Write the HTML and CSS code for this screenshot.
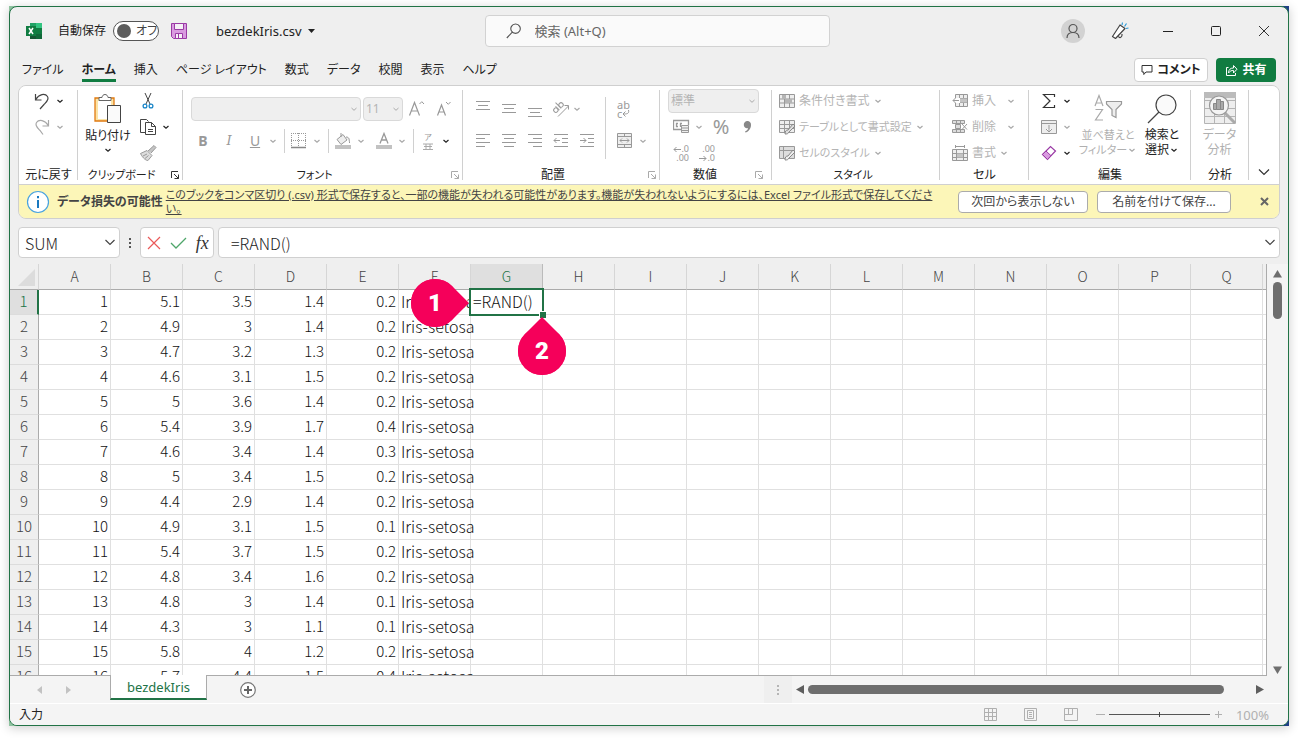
FILE: index.html
```html
<!DOCTYPE html>
<html lang="ja">
<head>
<meta charset="utf-8">
<title>bezdekIris.csv</title>
<link rel="stylesheet" href="styles.css">
</head>
<body>
<svg class="defs" aria-hidden="true">
  <symbol id="chev" viewBox="0 0 8 8"><path d="M1.5 3 4 5.3 6.5 3" fill="none" stroke="currentColor" stroke-width="1.2"/></symbol>
  <symbol id="launch" viewBox="0 0 10 10"><path d="M1.5 8V1.5H8M4 4l4.5 4.5M8.5 4.500V8.500H4.500" fill="none" stroke="currentColor"/></symbol>
</svg>
<div class="frame">
<div class="window">
  <header class="titlebar">
    <div class="title-left">
      <svg class="excel" width="17" height="16" viewBox="0 0 17 16"><path fill="#107c41" d="M4 0h12v16H4z"/><path fill="#21a366" d="M4 0h6v5H4z"/><path fill="#33c481" d="M10 0h6v5h-6z"/><path fill="#185c37" d="M4 10h6v6H4z"/><path fill="#134a2c" d="M4 11h12v5H4z" opacity=".4"/><path fill="#107c41" d="M0 3h10v10H0z"/><path d="m3 5 4 6M7 5l-4 6" stroke="#fff" stroke-width="1.500"/></svg>
      <span>自動保存</span>
      <button class="toggle" type="button" role="switch" aria-checked="false"><i></i>オフ</button>
      <button class="plain" type="button" aria-label="上書き保存"><svg width="16" height="16" viewBox="0 0 16 16"><path fill="#d99be0" stroke="#9a3aa5" d="M.5.5h15v15H2.500l-2-2z"/><path fill="#f5f0f6" stroke="#9a3aa5" d="M3.500.5h9v6h-9zM4.500 10.500h7v5h-7z"/><path stroke="#9a3aa5" d="M7.500 11v4"/></svg></button>
      <button class="plain docname" type="button">bezdekIris.csv <svg width="7" height="4" viewBox="0 0 7 4"><path d="M0 0h7L3.500 4z" fill="#222"/></svg></button>
    </div>
    <label class="search"><svg width="16" height="16" viewBox="0 0 16 16"><path d="M9.500 1a4.700 4.700 0 1 0 .1 0zM6.300 9.200.8 15" fill="none" stroke="#555" stroke-width="1.100"/></svg><input type="text" placeholder="検索 (Alt+Q)" aria-label="検索"></label>
    <div class="title-right">
      <button class="plain avatar" type="button" aria-label="アカウント"><svg width="24" height="24" viewBox="0 0 24 24"><circle cx="12" cy="12" r="12" fill="#d2d2d2"/><g fill="none" stroke="#555" stroke-width="1.200"><circle cx="12" cy="9.500" r="4"/><path d="M6 19c0-3.500 2.500-5.500 6-5.500s6 2 6 5.500"/></g></svg></button>
      <button class="plain" type="button" aria-label="新機能"><svg width="18" height="18" viewBox="0 0 18 18"><path d="M9 3 14 6.500 4.500 16.500 1.500 14.500zM7.500 14.500c1 2 4 1 3.500-2.500" fill="#fff" stroke="#444" stroke-width="1.200" stroke-linejoin="round"/><path d="m11 3 .5-2.500M13.500 4.500l2-3M15 6.500l2.500-.5" stroke="#2b9bd8" stroke-width="1.200"/></svg></button>
      <button class="plain" type="button" aria-label="最小化"><svg width="12" height="12"><path d="M1 6.500h10" stroke="#222"/></svg></button>
      <button class="plain" type="button" aria-label="最大化"><svg width="12" height="12"><rect x="1.500" y="1.500" width="9" height="9" rx="1" fill="none" stroke="#222"/></svg></button>
      <button class="plain" type="button" aria-label="閉じる"><svg width="12" height="12"><path d="m1 1 10 10M11 1 1 11" stroke="#333"/></svg></button>
    </div>
  </header>
  <nav class="tabs">
    <a href="#">ファイル</a><a href="#" class="on">ホーム</a><a href="#">挿入</a><a href="#">ページ レイアウト</a><a href="#">数式</a><a href="#">データ</a><a href="#">校閲</a><a href="#">表示</a><a href="#">ヘルプ</a>
    <button type="button" class="comment"><svg width="12" height="12" viewBox="0 0 12 12"><path d="M1 1.500h10v6.500H5L2.800 10.500V8H1z" fill="none" stroke="#333"/></svg>コメント</button>
    <button type="button" class="share"><svg width="13" height="13" viewBox="0 0 13 13"><path d="M3.500 3.500H1.500v8h9V9M3.500 9c0-3.500 2-5 5-5V1.500l3.500 3.700L8.500 9V6.500C6.500 6.300 5 7 3.500 9z" fill="none" stroke="#fff"/></svg>共有</button>
  </nav>

  <div class="panel">
  <section class="ribbon">
    <div class="group g-undo">
      <div class="body col">
        <div class="line"><button class="ib" aria-label="元に戻す"><svg width="18" height="18" viewBox="0 0 18 18"><path d="M2.500 2v6h6M2.800 7.500C6 2 12 1 14.500 4.500c2 3-1 5.500-3.500 8L7 17" fill="none" stroke="#444" stroke-width="1.200"/></svg></button><svg class="chev"><use href="#chev"/></svg></div>
        <div class="line off"><button class="ib" disabled aria-label="やり直し"><svg width="18" height="18" viewBox="0 0 18 18"><path d="M15.500 2v6h-6M15.200 7.500C12 2 6 1 3.500 4.500c-2 3 1 5.500 3.500 8l3 4" fill="none" stroke="#a8a8a8" stroke-width="1.200"/></svg></button><svg class="chev"><use href="#chev"/></svg></div>
      </div>
      <div class="cap">元に戻す</div>
    </div>
    <div class="group g-clip">
      <div class="body">
        <button class="big"><svg width="30" height="32" viewBox="0 0 30 32"><path d="M2 5h19v23H2z" fill="#fbe3a6" stroke="#e07a10" stroke-width="1.300"/><path d="M5 8h13v18H5z" fill="#fff"/><path d="M6 7.500V4.500h3c.3-4 5.700-4 6 0h3v3z" fill="#fff" stroke="#666"/><path d="M14.500 12.500h13v17h-13z" fill="#fafafa" stroke="#444"/></svg><span>貼り付け</span><svg class="chev"><use href="#chev"/></svg></button>
        <div class="col">
          <div class="line"><button class="ib" aria-label="切り取り"><svg width="16" height="16" viewBox="0 0 16 16"><path d="M5 0 10 11M11 0 6 11" stroke="#444" fill="none"/><g fill="#fff" stroke="#1a86c8" stroke-width="1.300"><circle cx="5" cy="13" r="1.900"/><circle cx="11" cy="13" r="1.900"/></g></svg></button></div>
          <div class="line"><button class="ib" aria-label="コピー"><svg width="18" height="18" viewBox="0 0 18 18"><path d="M7 14.500H1.500v-13h6l2 2M6.500 4.500h6l4 4v8h-10zM12.500 4.500v4h4M9 11.500h5M9 13.500h5" fill="none" stroke="#444"/></svg></button><svg class="chev"><use href="#chev"/></svg></div>
          <div class="line"><button class="ib" aria-label="書式のコピー"><svg width="18" height="18" viewBox="0 0 18 18"><path d="M1.500 9.500 8 6.500l5 5-4 5c-2 0-5-2-7.500-7zM4 12l4-2M6 14.500l3.500-3" fill="#ddd" stroke="#999"/><path d="m9 7 6-5.500 2 2L12 9" fill="#c4c4c4" stroke="#999"/></svg></button></div>
        </div>
      </div>
      <div class="cap kana">クリップボード</div><svg class="launch dark"><use href="#launch"/></svg>
    </div>
    <div class="group g-font off">
      <div class="body col">
        <div class="line tall boxes">
          <select class="fontname" disabled aria-label="フォント"><option></option></select><select class="fontsize" disabled aria-label="フォント サイズ"><option>11</option></select>
          <button class="ib" disabled aria-label="拡大"><svg width="18" height="18" viewBox="0 0 18 18"><path d="M1.500 15.500 6.500 2.500l5 13M3.200 11h6.600" fill="none" stroke="#999" stroke-width="1.200"/><path d="m11.500 4 2.300-2.300L16 4" fill="none" stroke="#999"/></svg></button>
          <button class="ib" disabled aria-label="縮小"><svg width="18" height="18" viewBox="0 0 18 18"><path d="M2.500 15.500 6.500 5l4 10.500M4 12h5" fill="none" stroke="#999" stroke-width="1.200"/><path d="M11 2l2.300 2.300L15.500 2" fill="none" stroke="#999"/></svg></button>
        </div>
        <div class="line tall">
          <button class="ib glyph" disabled><b>B</b></button><button class="ib glyph" disabled><i>I</i></button><button class="ib glyph" disabled><u>U</u></button><svg class="chev"><use href="#chev"/></svg><span class="bar"></span>
          <button class="ib" disabled aria-label="罫線"><svg width="16" height="16" viewBox="0 0 16 16"><path d="M0 .5h15M.5 0v14M14.500 0v14M0 7.500h15M7.500 0v14" stroke="#999" stroke-dasharray="1 1"/><path d="M0 14.500h15" stroke="#888" stroke-width="1.500"/></svg></button><svg class="chev"><use href="#chev"/></svg><span class="bar"></span>
          <button class="ib" disabled aria-label="塗りつぶし"><svg width="18" height="18" viewBox="0 0 18 18"><path d="M1 13h16v4H1z" fill="#c2c2c2"/><path d="m3 7.500 6-5 4 5.500-6 4.500zM7 5V1M12 5c3 0 3.500 2 3.500 6" fill="#eee" stroke="#999"/></svg></button><svg class="chev"><use href="#chev"/></svg><span class="gap"></span>
          <button class="ib" disabled aria-label="文字色"><svg width="18" height="18" viewBox="0 0 18 18"><path d="M1 13h16v4H1z" fill="#c2c2c2"/><path d="M5 11.500 9 1.500l4 10M6.500 8h5" fill="none" stroke="#999" stroke-width="1.300"/></svg></button><svg class="chev"><use href="#chev"/></svg><span class="bar"></span>
          <button class="ib ruby" disabled><small>ア</small><svg width="10" height="8" viewBox="0 0 10 8"><path d="M0 1h10M1 3.500h8M0 6.500h10M3 1v5M7 1v5" stroke="#aaa"/></svg></button><svg class="chev dark"><use href="#chev"/></svg>
        </div>
      </div>
      <div class="cap kana">フォント</div><svg class="launch"><use href="#launch"/></svg>
    </div>
    <div class="group g-align off">
      <div class="body">
        <div class="col">
          <div class="line tall">
            <button class="ib" disabled aria-label="上揃え"><svg width="16" height="18"><path d="M1 1.500h14M3 5.500h10M1 9.500h14" stroke="#999"/></svg></button><button class="ib" disabled aria-label="中央揃え"><svg width="16" height="18"><path d="M1 4.500h14M3 8.500h10M1 12.500h14" stroke="#999"/></svg></button><button class="ib" disabled aria-label="下揃え"><svg width="16" height="18"><path d="M1 8.500h14M3 12.500h10M1 16.500h14" stroke="#999"/></svg></button><button class="ib" disabled aria-label="方向"><svg width="18" height="18" viewBox="0 0 18 18"><g fill="none" stroke="#999"><g transform="rotate(-45 6 8)"><circle cx="3" cy="8" r="2.200"/><path d="M5.500 5v5.500M8 2.500v8"/><circle cx="10.300" cy="8" r="2.200"/></g><path d="M6 16.500 16.500 6M12.500 5.500h4v4"/></g></svg></button><svg class="chev"><use href="#chev"/></svg>
          </div>
          <div class="line tall">
            <button class="ib" disabled aria-label="左揃え"><svg width="16" height="16"><path d="M1 1.500h14M1 5.500h9M1 9.500h14M1 13.500h9" stroke="#999"/></svg></button><button class="ib" disabled aria-label="中央"><svg width="16" height="16"><path d="M1 1.500h14M3 5.500h10M1 9.500h14M3 13.500h10" stroke="#999"/></svg></button><button class="ib" disabled aria-label="右揃え"><svg width="16" height="16"><path d="M1 1.500h14M6 5.500h9M1 9.500h14M6 13.500h9" stroke="#999"/></svg></button><button class="ib" disabled aria-label="インデント解除"><svg width="16" height="16"><path d="M1 1.500h14M9 5.500h6M9 9.500h6M1 13.500h14M1 7.500h6M3.500 5 1 7.500 3.500 10" fill="none" stroke="#999"/></svg></button><button class="ib" disabled aria-label="インデント"><svg width="16" height="16"><path d="M1 1.500h14M9 5.500h6M9 9.500h6M1 13.500h14M1 7.500h6M4.500 5 7 7.500 4.500 10" fill="none" stroke="#999"/></svg></button>
          </div>
        </div>
        <span class="bar long"></span>
        <div class="col">
          <div class="line tall"><button class="ib wrap" disabled aria-label="折り返し"><span>ab</span><span>c<svg width="8" height="8"><path d="M6.500 0c1 4-2 4-5.500 4M3.500 1.500 1 4l2.500 2.500" fill="none" stroke="#999"/></svg></span></button></div>
          <div class="line tall"><button class="ib" disabled aria-label="結合"><svg width="16" height="16"><path d="M.5.5h14v14H.5zM.5 3.500h14M.5 11.500h14M7.500.5v3M7.500 11.500v3M3 7.500h9M5 5.500l-2 2 2 2M10 5.500l2 2-2 2" fill="#eee" stroke="#999"/></svg></button><svg class="chev"><use href="#chev"/></svg></div>
        </div>
      </div>
      <div class="cap">配置</div><svg class="launch"><use href="#launch"/></svg>
    </div>
    <div class="group g-num off">
      <div class="body col">
        <div class="line"><select class="numfmt" disabled aria-label="表示形式"><option>標準</option></select></div>
        <div class="line"><button class="ib" disabled aria-label="通貨"><svg width="17" height="16" viewBox="0 0 17 16"><path d="M8 10.500H.5v-9h15V6M5 4.500H3.500v3H5M7.500 8V4.500H9" fill="none" stroke="#999" stroke-width="1.300"/><path d="M8.500 6.500h7v7h-7zM8.500 9h7M8.500 11.500h7" fill="#eee" stroke="#999"/></svg></button><svg class="chev"><use href="#chev"/></svg><button class="ib glyph pct" disabled>%</button><button class="ib" disabled aria-label="桁区切り"><svg width="9" height="14" viewBox="0 0 9 14"><path d="M4.500 1a3.600 3.600 0 0 1 3.500 4c0 4-3 7-5.500 7.500L2 11.500c2-.8 3-2 3-3.500-2 .8-4.200-.8-4.200-3A3.600 3.600 0 0 1 4.500 1z" fill="#888"/></svg></button></div>
        <div class="line"><button class="ib dec" disabled aria-label="小数点増"><span><svg width="8" height="8"><path d="M1 4.500h7M3.500 2 1 4.500 3.500 7" fill="none" stroke="#999"/></svg>.0</span><span>.00</span></button><button class="ib dec" disabled aria-label="小数点減"><span>.00</span><span><svg width="8" height="8"><path d="M0 4.500h7M4.500 2 7 4.500 4.500 7" fill="none" stroke="#999"/></svg>.0</span></button></div>
      </div>
      <div class="cap">数値</div><svg class="launch"><use href="#launch"/></svg>
    </div>
    <div class="group g-style off">
      <div class="body col">
        <button class="item" disabled><svg width="16" height="14"><path d="M.5.5h15v13H.5zM.5 5h15M.5 9h15M5.500.5v13M10.500.5v13" fill="#eee" stroke="#999"/><path d="M3 1h4v4H3zM6 5h7v4H6z" fill="#b5b5b5"/></svg>条件付き書式<svg class="chev"><use href="#chev"/></svg></button>
        <button class="item kana" disabled><svg width="16" height="15"><path d="M.5.5h15v12H.5zM.5 4.500h15M.5 8.500h15M5.500.5v12M10.500.5v12" fill="#eee" stroke="#999"/><path d="M6 14c0-3 1-4 3-4l5-6 2 2-6 6c-1 2-2 2-4 2z" fill="#ddd" stroke="#888"/></svg>テーブルとして書式設定<svg class="chev"><use href="#chev"/></svg></button>
        <button class="item kana" disabled><svg width="16" height="15"><path d="M.5.5h15v12H.5zM.5 4.500h15M4.500.5v12" fill="#ddd" stroke="#999"/><path d="M6 14c0-3 1-4 3-4l5-6 2 2-6 6c-1 2-2 2-4 2z" fill="#eee" stroke="#888"/></svg>セルのスタイル<svg class="chev"><use href="#chev"/></svg></button>
      </div>
      <div class="cap kana">スタイル</div>
    </div>
    <div class="group g-cell off">
      <div class="body col">
        <button class="item" disabled><svg width="16" height="14"><path d="M3.500.5h12v12h-12zM3.500 4.500h12M3.500 8.500h12M7.500.5v12M11.500.5v12" fill="#eee" stroke="#999"/><path d="M0 4h8v5H0z" fill="#fff"/><path d="M8 4.500h7v4H8z" fill="#c4c4c4"/><path d="M1 6.500h6M3.500 4 1 6.500 3.500 9" fill="none" stroke="#999"/></svg>挿入<svg class="chev"><use href="#chev"/></svg></button>
        <button class="item" disabled><svg width="16" height="14"><path d="M.5.5h12v3M.5.5v3h12M4.500.5v3M8.500.5v3M3.500 4.500h5v4h-5zM.5 9.500h12v3H.5zM4.500 9.500v3M8.500 9.500v3" fill="#ddd" stroke="#999"/><path d="m10 4 5 5.500M15 4l-5 5.500" stroke="#999"/></svg>削除<svg class="chev"><use href="#chev"/></svg></button>
        <button class="item near" disabled><svg width="16" height="16"><path d="M.5 4.500h15v11H.5zM.5 8.500h15M.5 12.500h15M4.500 4.500v11M11.500 4.500v11" fill="#eee" stroke="#999"/><path d="M5 8.500h6v4H5z" fill="#c4c4c4"/><path d="M3 1.500h10M3.500 0v3M12.500 0v3" stroke="#999"/></svg>書式<svg class="chev"><use href="#chev"/></svg></button>
      </div>
      <div class="cap">セル</div>
    </div>
    <div class="group g-edit">
      <div class="body">
        <div class="col">
          <div class="line"><button class="ib" aria-label="合計"><svg width="14" height="16" viewBox="0 0 14 16"><path d="M12.500 4V1.500H1.500L8 8l-6.500 6.500h11V12" fill="none" stroke="#333" stroke-width="1.200"/></svg></button><svg class="chev"><use href="#chev"/></svg></div>
          <div class="line off"><button class="ib" disabled aria-label="フィル"><svg width="16" height="14"><path d="M.5.5h15v13H.5zM.5 3.500h15M8 5v7M5 9l3 3 3-3" fill="#eee" stroke="#999"/></svg></button><svg class="chev"><use href="#chev"/></svg></div>
          <div class="line"><button class="ib" aria-label="クリア"><svg width="16" height="16" viewBox="0 0 16 16"><path d="m1.500 9.500 8-8L14.500 6l-8 8.500z" fill="#fff" stroke="#9a3aa5" stroke-width="1.200"/><path d="m1.500 9.500 3.500-3.500 5 4.700-3.500 3.800z" fill="#d99be0" stroke="#9a3aa5"/></svg></button><svg class="chev"><use href="#chev"/></svg></div>
        </div>
        <button class="big off kana" disabled><svg width="30" height="30" viewBox="0 0 30 30"><path d="m2 12 4-10.500L10 12M3.300 9h5.400M2.500 15.500h7L2.500 26h7.500" fill="none" stroke="#aaa" stroke-width="1.200"/><path d="M13.500 7.500h15V10l-5.500 5.500v8l-4-2v-6L13.500 10z" fill="#eee" stroke="#999" stroke-width="1.200"/></svg><span>並べ替えと<br>フィルター<svg class="chev"><use href="#chev"/></svg></span></button>
        <button class="big"><svg width="30" height="30" viewBox="0 0 30 30"><circle cx="19" cy="11" r="10" fill="#fafafa" stroke="#444" stroke-width="1.200"/><path d="M12 18 1 29" stroke="#444" stroke-width="1.300"/></svg><span>検索と<br>選択<svg class="chev"><use href="#chev"/></svg></span></button>
      </div>
      <div class="cap">編集</div>
    </div>
    <div class="group g-data">
      <div class="body"><button class="big off" disabled><svg width="32" height="32" viewBox="0 0 32 32"><path d="M.5.5h31v31H.5zM.5 8.500h31M.5 16.500h31M.5 24.500h31M10.500 20v12M20.500 20v12" fill="#eee" stroke="#b4b4b4"/><path d="M0 0h32v6H0z" fill="#bbb"/><path d="m21 21 10 10" stroke="#aaa" stroke-width="3"/><circle cx="15" cy="13.500" r="9.500" fill="#f4f4f4" stroke="#999" stroke-width="1.200"/><path d="M9.500 11.500h3v6h-3zM12.500 7.500h4v10h-4zM16.500 9.500h3v8h-3z" fill="#aaa" stroke="#888"/></svg><span>データ<br>分析</span></button></div>
      <div class="cap">分析</div>
    </div>
    <button class="plain fold" type="button" aria-label="リボンを折りたたむ"><svg width="12" height="8"><path d="m1 1.500 5 5 5-5" fill="none" stroke="#333" stroke-width="1.200"/></svg></button>
  </section>
  <section class="message">
    <svg class="info" width="24" height="24" viewBox="0 0 24 24"><circle cx="12" cy="12" r="10.500" fill="#fff" stroke="#4aa3df" stroke-width="1.200"/><path d="M12 10v8M12 6v2.300" stroke="#1a79c0" stroke-width="2"/></svg>
    <strong>データ損失の可能性</strong>
    <a href="#">このブックをコンマ区切り (.csv) 形式で保存すると、一部の機能が失われる可能性があります。機能が失われないようにするには、Excel ファイル形式で保存してください。</a>
    <button type="button" class="mbtn">次回から表示しない</button>
    <button type="button" class="mbtn wide">名前を付けて保存...</button>
    <button type="button" class="plain" aria-label="閉じる"><svg width="9" height="9"><path d="m1 1 7 7M8 1 1 8" stroke="#666" stroke-width="2"/></svg></button>
  </section>
  </div>

  <section class="formula">
    <label class="namebox"><input type="text" value="SUM" aria-label="名前ボックス"><svg width="10" height="7"><path d="m.5 1 4.500 4.500L9.500 1" fill="none" stroke="#444" stroke-width="1.200"/></svg></label>
    <svg class="dots" width="4" height="12"><path d="M1 1h2v2H1zM1 5h2v2H1zM1 9h2v2H1z" fill="#555"/></svg>
    <div class="fx">
      <button class="plain" aria-label="キャンセル"><svg width="14" height="14"><path d="m1 1 12 12M13 1 1 13" stroke="#ea5a5a" stroke-width="1.200"/></svg></button>
      <button class="plain" aria-label="入力"><svg width="17" height="12"><path d="m1 6 5 5L16 1" fill="none" stroke="#4fa66a" stroke-width="1.300"/></svg></button>
      <button class="plain fxi">fx</button>
    </div>
    <label class="fbox"><input type="text" value="=RAND()" aria-label="数式"><svg width="10" height="7"><path d="m.5 1 4.500 4.500L9.500 1" fill="none" stroke="#444" stroke-width="1.200"/></svg></label>
  </section>

  <main class="sheet">
    <div class="gridwrap"><table class="grid"><thead></thead><tbody></tbody></table></div>
    <div class="vscroll"><svg width="9" height="8"><path d="M4.500 0 9 7.500H0z" fill="#6e6e6e"/></svg><i></i><svg class="end" width="9" height="8"><path d="M4.500 8 9 .5H0z" fill="#6e6e6e"/></svg></div>
  </main>

  <footer>
    <div class="sheetbar">
      <div class="navs"><svg width="5" height="8"><path d="M5 0v8L0 4z" fill="#c2c2c2"/></svg><svg width="5" height="8"><path d="M0 0v8l5-4z" fill="#c2c2c2"/></svg></div>
      <button type="button" class="stab">bezdekIris</button>
      <button type="button" class="plain add" aria-label="新しいシート"><svg width="16" height="16"><circle cx="8" cy="8" r="7.300" fill="#fff" stroke="#777" stroke-width="1.200"/><path d="M8 4v8M4 8h8" stroke="#666" stroke-width="2"/></svg></button>
      <div class="split"><svg width="2" height="10"><path d="M0 0h2v2H0zM0 4h2v2H0zM0 8h2v2H0z" fill="#b5b5b5"/></svg></div>
      <div class="hscroll"><svg width="8" height="9"><path d="M8 0v9L0 4.500z" fill="#5e5e5e"/></svg><i></i><svg class="end" width="8" height="9"><path d="M0 0v9l8-4.500z" fill="#5e5e5e"/></svg></div>
    </div>
    <div class="status">
      <span>入力</span>
      <div class="views">
        <button class="plain" aria-label="標準"><svg width="13" height="13"><path d="M.5.500h12v12H.5zM4.500.5v12M8.500.5v12M.5 4.500h12M.5 8.500h12" fill="none" stroke="#b0b0b0"/></svg></button>
        <button class="plain" aria-label="ページ レイアウト"><svg width="13" height="13"><path d="M.5.5h12v12H.5zM3.500 2.500h6v8h-6zM5 4.500h3M5 6.500h3M5 8.500h3" fill="none" stroke="#b0b0b0"/></svg></button>
        <button class="plain" aria-label="改ページ"><svg width="14" height="13"><path d="M.5.5h13v12H.5zM4.500.5v6M8.500.5v6M.5 6.500h8" fill="none" stroke="#b0b0b0"/></svg></button>
      </div>
      <div class="zoom"><button class="plain" aria-label="縮小"><svg width="9" height="9"><path d="M0 4.500h9" stroke="#b0b0b0"/></svg></button><input type="range" min="0" max="100" value="50" aria-label="ズーム"><button class="plain" aria-label="拡大"><svg width="9" height="9"><path d="M1 4.500h7M4.500 1v7" stroke="#b0b0b0"/></svg></button><span>100%</span></div>
    </div>
  </footer>
</div>
</div>
<script src="grid.js"></script>
</body>
</html>
```
FILE: styles.css
```css
* { box-sizing: border-box; }
html, body { height: 100%; }
body { margin: 0; padding: 6px 9px 12px; background: #fff; color: #222; font: 12px/16px "Noto Sans", "Noto Sans CJK JP", sans-serif; font-feature-settings: "palt"; overflow: hidden; }
button, input, select { font: inherit; font-feature-settings: inherit; color: inherit; margin: 0; padding: 0; }
button { border: 0; background: none; white-space: nowrap; }
svg { display: block; flex: none; }
.defs { position: absolute; width: 0; height: 0; }
.frame { height: 100%; background: linear-gradient(90deg, #8fc3a0 0, #14224a 50%, #1f3f86 100%); box-shadow: 0 2px 10px #0003; }
.window { height: 100%; display: flex; flex-direction: column; background: #efefef; border: 1px solid #217346; border-radius: 8px; overflow: hidden; }
.plain { display: flex; align-items: center; justify-content: center; }

.titlebar { display: grid; grid-template-columns: 1fr 345px 1fr; align-items: center; height: 48px; flex: none; padding-left: 16px; }
.title-left { display: flex; align-items: center; }
.title-left > span { margin-left: 15px; }
.toggle { display: flex; align-items: center; gap: 5px; width: 46px; height: 20px; margin: 0 12px 0 7px; padding-left: 3px; border: 1px solid #555; border-radius: 10px; background: #fff; color: #444; line-height: 16px; }
.toggle i { flex: none; width: 14px; height: 14px; border-radius: 50%; background: #5d5d5d; }
.docname { gap: 6px; margin-left: 29px; font-size: 13px; }
.search { display: flex; align-items: center; gap: 13px; height: 32px; padding-left: 20px; background: #fafafa; border: 1px solid #d2d2d2; border-radius: 4px; }
.search input { flex: 1; min-width: 0; border: 0; background: none; font-size: 13px; outline: 0; }
.search input::placeholder { color: #666; opacity: 1; }
.title-right { display: flex; justify-content: flex-end; }
.title-right .plain { width: 48px; height: 32px; }
.title-right .avatar { width: 46px; }

.tabs { display: flex; align-items: center; gap: 18px; height: 30px; flex: none; padding: 0 12px; font-size: 12px; }
.tabs a { color: #222; text-decoration: none; line-height: 18px; padding-top: 2px; border-bottom: 3px solid transparent; white-space: nowrap; }
.tabs .on { font-weight: 700; border-color: #107c41; }
.comment, .share { display: flex; align-items: center; justify-content: center; gap: 4px; height: 24px; border-radius: 4px; font-weight: 700; }
.comment { width: 74px; margin-left: auto; background: #fff; border: 1px solid #d0d0d0; }
.share { width: 60px; margin-left: -10px; background: #107c41; color: #fff; }

.panel { flex: none; margin: 0 8px; border: 1px solid #cfcfcf; border-radius: 8px; overflow: hidden; }
.ribbon { display: flex; height: 99px; background: #fff; border-bottom: 1px solid #d0d0d0; }
.group { position: relative; flex: none; display: flex; flex-direction: column; padding-top: 2px; }
.group::after { content: ""; position: absolute; right: 0; top: 4px; bottom: 4px; width: 1px; background: #d0d0d0; }
.body { display: flex; height: 79px; }
.col { display: flex; flex-direction: column; }
.cap { text-align: center; line-height: 18px; }
.kana { font-size: 11px; }
.line { display: flex; align-items: center; height: 26px; }
.line.tall { height: 32px; }
.ib { display: flex; align-items: center; justify-content: center; width: 26px; height: 24px; }
.chev { width: 10px; height: 8px; color: #222; }
.off { color: #b0b0b0; }
.off .chev { color: #a8a8a8; }
.off .chev.dark { color: #222; }
.off .cap { color: #222; }
.launch { position: absolute; right: 3px; bottom: 4px; width: 10px; height: 10px; color: #aaa; }
.launch.dark { color: #333; }
.bar { width: 1px; height: 24px; margin: 0 1px 0 6px; background: #d0d0d0; }
.bar.long { height: 62px; margin: 9px 6px 0 5px; }
.gap { width: 5px; }
.glyph { font-size: 14px; color: #999; }
.glyph i { font-family: "DejaVu Serif", serif; font-size: 13px; }
.pct { font-size: 20px; }
.ruby { flex-direction: column; gap: 1px; color: #999; }
.ruby small { font-size: 8px; line-height: 10px; }
.wrap, .dec { flex-direction: column; color: #999; }
.wrap span, .dec span { display: flex; align-items: center; }
.wrap span { width: 16px; font-size: 11px; line-height: 9px; }
.dec span { width: 16px; justify-content: flex-end; font-size: 9px; line-height: 9px; }
.big { display: flex; flex-direction: column; align-items: center; line-height: 15px; }
.big span { white-space: nowrap; }
.big span .chev { display: inline-block; }
.g-undo { width: 59px; }
.g-undo .body { padding-left: 10px; }
.g-clip { width: 105px; }
.g-clip .big { width: 54px; margin: 5px 0 0 3px; }
.g-clip .big span { margin-top: 3px; }
.g-clip .big .chev { margin-top: 3px; }
.g-clip .cap { padding-right: 18px; }
.g-font { width: 280px; }
.g-font .cap { padding-right: 17px; }
.g-font .body, .g-align .body { padding-left: 7px; }
.g-font .body, .g-align .col { padding-top: 5px; }
.boxes { padding-left: 1px; gap: 2px; }
.boxes .ib { margin-left: -1px; }
select { appearance: none; height: 24px; border: 1px solid #d9d9d9; border-radius: 4px; background: #efefef url("data:image/svg+xml,%3Csvg xmlns='http://www.w3.org/2000/svg' width='8' height='8'%3E%3Cpath d='M1.500 3 4 5.300 6.500 3' fill='none' stroke='%23aaa'/%3E%3C/svg%3E") no-repeat right 2px center; color: #b4b4b4; opacity: 1; }
select:disabled { opacity: 1; color: #b4b4b4; }
.fontname { width: 170px; }
.fontsize { width: 40px; padding-left: 2px; }
.numfmt { width: 91px; padding-left: 2px; }
.g-align { width: 197px; }
.g-align .cap { padding-right: 17px; }
.g-align .line:first-child .chev { margin-left: -2px; }
.g-num { width: 112px; }
.g-num .cap { padding-right: 22px; }
.g-num .launch { right: 8px; }
.g-num .body { padding-left: 8px; }
.g-num .chev { margin: 0 4px 0 0; }
.g-style { width: 168px; }
.g-style .cap { padding-right: 6px; }
.item { display: flex; align-items: center; gap: 4px; height: 26px; color: #b4b4b4; }
.item .chev { margin-left: -1px; }
.g-style .body { padding-left: 7px; }
.g-cell { width: 89px; }
.g-cell .body { padding-left: 12px; }
.g-cell .item { width: 64px; }
.g-cell .item .chev { margin-left: auto; }
.g-cell .near .chev { margin-left: -1px; }
.g-edit { width: 162px; }
.g-edit .body { padding-left: 7px; }
.g-edit .big { margin-top: 6px; width: 56px; gap: 3px; }
.g-edit .big + .big { width: 52px; }
.g-edit .col { width: 44px; }
.g-data { width: 58px; }
.g-data .big { width: 57px; margin-top: 4px; gap: 3px; }
.fold { flex: 1; align-items: flex-end; padding-bottom: 8px; }

.message { display: flex; align-items: center; height: 33px; padding: 0 10px 0 7px; background: #fcf6b8; color: #444; }
.message strong { margin: 0 3px 0 7px; white-space: nowrap; }
.message a { flex: 1; color: #444; font-size: 11px; line-height: 14px; word-break: break-all; }
.mbtn { width: 130px; height: 22px; margin: 0 9px 0 22px; background: #fff; border: 1px solid #ababab; border-radius: 4px; line-height: 20px; }
.mbtn.wide { width: 134px; margin: 0 29px 0 0; }

.formula { display: flex; align-items: center; flex: none; height: 31px; margin: 8px 8px 6px; font-size: 14px; }
.namebox, .fx, .fbox { display: flex; align-items: center; height: 31px; background: #fff; border: 1px solid #d0d0d0; border-radius: 4px; }
.formula input { border: 0; background: none; outline: 0; min-width: 0; flex: 1; font: 300 16px/24px "Noto Sans CJK JP", sans-serif; }
.namebox { width: 102px; padding: 0 4px 0 6px; }
.dots { margin: 0 8px; }
.fx { width: 74px; justify-content: space-around; padding-left: 2px; }
.fxi { font: italic 18px/20px "Liberation Serif", serif; color: #333; }
.fbox { flex: 1; margin-left: 4px; padding: 0 4px 0 12px; }

.sheet { flex: 1; min-height: 0; display: flex; }
.gridwrap { flex: 1; min-width: 0; overflow: hidden; border-right: 1px solid #ababab; border-bottom: 1px solid #ababab; }
.grid { table-layout: fixed; width: 0; border-collapse: separate; border-spacing: 0; font: 300 15px/22px "Noto Sans CJK JP", sans-serif; color: #111; background: #fff; }
.grid th { width: 72px; height: 25px; padding: 0; font-weight: 300; color: #444; background: #efefef; vertical-align: top; }
.grid thead th { height: 26px; font-size: 14px; line-height: 24px; border-right: 1px solid #d6d6d6; border-bottom: 1px solid #ababab; }
.grid th:first-child { width: 29px; border-right: 1px solid #ababab; border-bottom: 1px solid #dcdcdc; }
.grid thead th:first-child { border-right-color: #d6d6d6; border-bottom-color: #ababab; }
.grid thead th svg { margin: 5px 3px 0 auto; }
.grid td { height: 25px; padding: 0 2px; text-align: right; vertical-align: top; border-right: 1px solid #e0e0e0; border-bottom: 1px solid #e0e0e0; white-space: nowrap; background: #fff; }
.grid td.name { font-size: 16px; text-align: left; overflow: visible; position: relative; z-index: 1; }
.grid thead th.sel { background: #dfdfdf; color: #217346; border-right-color: #bbb; }
.grid tbody th.sel { background: #dfdfdf; color: #217346; border-right: 2px solid #217346; }
.grid td.active { font-size: 16px; position: relative; z-index: 2; text-align: left; }
.active::before { content: ""; position: absolute; inset: -2px -2px -2px -2px; border: 2px solid #217346; background: #fff; }
.active span { position: relative; }
.active::after { content: ""; position: absolute; right: -4px; bottom: -4px; width: 6px; height: 6px; border: solid #fff; border-width: 1px 0 0 1px; background: #217346; }
.pin { position: absolute; z-index: 3; display: grid; place-items: center; width: 48px; height: 48px; background: #f5005a; border-radius: 50%; color: #fff; font: 900 24px/24px Roboto, sans-serif; }
.pin::before { content: ""; position: absolute; inset: 0; background: #f5005a; border-radius: 50% 0 50% 50%; z-index: -1; }
.pin.one { left: -60px; top: -11px; }
.pin.one::before { transform: rotate(45deg); }
.pin.two { left: 47px; top: 37px; }
.pin.two::before { transform: rotate(-45deg); }

.vscroll { width: 21px; display: flex; flex-direction: column; align-items: center; padding: 6px 0 2px; background: #f4f4f4; }
.vscroll i { width: 9px; height: 37px; margin-top: 4px; border-radius: 5px; background: #6e6e6e; }
.vscroll .end { margin-top: auto; }

footer { flex: none; background: #f4f4f4; }
.sheetbar { display: flex; height: 28px; border-bottom: 1px solid #fff; align-items: stretch; }
.navs { width: 100px; display: flex; align-items: center; gap: 24px; padding-left: 27px; }
.stab { width: 97px; height: 25px; margin-top: -1px; position: relative; background: #fff; color: #217346; font-size: 13px; border: 1px solid #ababab; border-width: 0 1px 2px; border-bottom-color: #217346; }
.add { margin-left: 33px; }
.split { width: 28px; margin-left: auto; display: grid; place-items: center; background: #efefef; }
.hscroll { width: 476px; margin-right: 20px; display: flex; align-items: center; padding: 0 4px; }
.hscroll i { flex: 0 1 416px; height: 9px; margin-left: 4px; border-radius: 5px; background: #6e6e6e; }
.hscroll .end { margin-left: auto; }
.status { display: flex; align-items: center; height: 21px; padding: 0 19px 0 9px; }
.views { display: flex; gap: 27px; margin-left: auto; }
.zoom { display: flex; align-items: center; margin-left: 18px; color: #b0b0b0; }
.zoom input { appearance: none; width: 101px; height: 12px; margin: 0 4px; background: linear-gradient(#555, #555) center / 100% 1px no-repeat; }
.zoom input::-webkit-slider-thumb { appearance: none; width: 1px; height: 5px; background: #444; }
.zoom span { margin-left: 13px; font-size: 13px; }
```
FILE: grid.js
```js
const rows = [
  [5.1, 3.5, 1.4, 0.2], [4.9, 3, 1.4, 0.2], [4.7, 3.2, 1.3, 0.2], [4.6, 3.1, 1.5, 0.2],
  [5, 3.6, 1.4, 0.2], [5.4, 3.9, 1.7, 0.4], [4.6, 3.4, 1.4, 0.3], [5, 3.4, 1.5, 0.2],
  [4.4, 2.9, 1.4, 0.2], [4.9, 3.1, 1.5, 0.1], [5.4, 3.7, 1.5, 0.2], [4.8, 3.4, 1.6, 0.2],
  [4.8, 3, 1.4, 0.1], [4.3, 3, 1.1, 0.1], [5.8, 4, 1.2, 0.2], [5.7, 4.4, 1.5, 0.4]
];
const letters = "ABCDEFGHIJKLMNOPQR".split("");
const corner = '<th><svg width="17" height="17"><path d="M17 0v17H0z" fill="#dcdcdc"/></svg></th>';
document.querySelector(".grid thead").innerHTML =
  "<tr>" + corner + letters.map(l => `<th${l === "G" ? ' class="sel"' : ""}>${l}</th>`).join("") + "</tr>";

const active = '<td class="active"><span>=RAND()</span><b class="pin one">1</b><b class="pin two">2</b></td>';
document.querySelector(".grid tbody").innerHTML = rows.map((r, i) => {
  const nums = [i + 1, ...r].map(v => `<td>${v}</td>`).join("");
  const rest = letters.slice(7).map(() => "<td></td>").join("");
  return `<tr><th${i ? "" : ' class="sel"'}>${i + 1}</th>${nums}<td class="name">Iris-setosa</td>${i ? "<td></td>" : active}${rest}</tr>`;
}).join("");
```
